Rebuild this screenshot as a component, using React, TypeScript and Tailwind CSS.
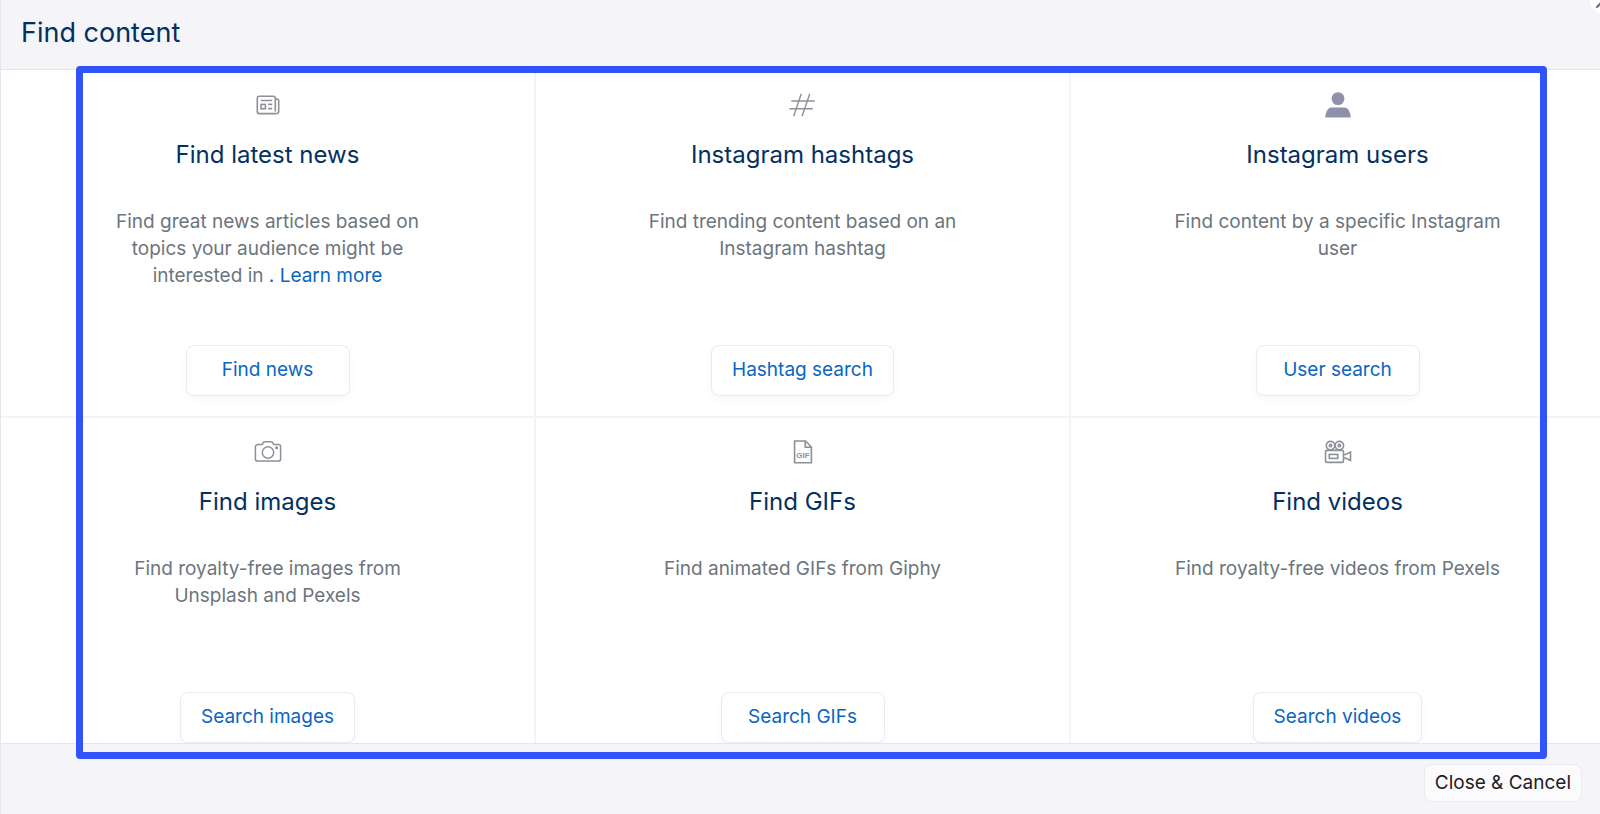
import { X } from "lucide-react";
import type { ReactNode } from "react";

type Source = {
  id: string;
  title: string;
  description: ReactNode;
  action: string;
  icon: ReactNode;
};

const NewsIcon = () => (
  <svg viewBox="0 0 28 28" className="h-7 w-7" fill="none" stroke="currentColor" strokeWidth="1.6" aria-hidden="true">
    <path d="M22.2 22.6H5.4a2.1 2.1 0 0 1-2.1-2.1V7.1c0-1.1.8-1.9 1.9-1.9h14.200c1.100 0 1.900.8 1.900 1.900v13.300" />
    <path d="M21.300 8h1.600c1 0 1.800.8 1.800 1.800v10.500c0 1.300-1.100 2.300-2.400 2.300" />
    <path d="M6.800 9.500h11.400M14.200 13.400h4M14.200 17.600h4" />
    <rect x="7" y="13.400" width="4.400" height="4.400" />
  </svg>
);

const HashIcon = () => (
  <svg viewBox="0 0 28 28" className="h-7 w-7" fill="none" stroke="currentColor" strokeWidth="1.400" aria-hidden="true">
    <path d="M12.300 2.800 4.600 25.300M20.800 2.800 13.100 25.300M2.300 10h23.500M.3 17.800h23.500" />
  </svg>
);

const UserIcon = () => (
  <svg viewBox="0 0 28 28" className="h-7 w-7" fill="#8f91aa" aria-hidden="true">
    <circle cx="14" cy="7.600" r="6.400" />
    <path d="M1.200 26.500c.3-3.800 1.500-7 3.200-8.700 1-1 2.200-1.300 3.800-1.300h11.600c1.600 0 2.800.3 3.800 1.300 1.700 1.700 2.900 4.900 3.200 8.700z" />
  </svg>
);

const CameraIcon = () => (
  <svg viewBox="0 0 28 28" className="h-7 w-7" fill="none" stroke="currentColor" strokeWidth="1.500" aria-hidden="true">
    <path d="M3.500 6.600h4.700l1.300-2.200c.3-.5.7-.7 1.200-.7h6.600c.5 0 .9.200 1.200.7l1.300 2.200h4.700c1.200 0 2.100.9 2.100 2.100v12.300c0 1.200-.9 2.100-2.100 2.100h-21c-1.200 0-2.100-.9-2.100-2.100V8.700c0-1.200.9-2.100 2.100-2.100z" />
    <circle cx="14" cy="14.500" r="5.700" />
    <circle cx="22.600" cy="9.800" r=".8" fill="currentColor" />
  </svg>
);

const GifIcon = () => (
  <svg viewBox="0 0 28 28" className="h-7 w-7" fill="none" stroke="currentColor" strokeWidth="1.600" aria-hidden="true">
    <path d="M16.500 3H5.600v21.800h16.800V9z" />
    <path d="M16.300 3v6.200h6" />
    <text
      x="14"
      y="20"
      textAnchor="middle"
      fontSize="8"
      fontWeight="700"
      fontFamily="Liberation Sans, sans-serif"
      fill="currentColor"
      stroke="none"
    >
      GIF
    </text>
  </svg>
);

const VideoIcon = () => (
  <svg viewBox="0 0 28 28" className="h-7 w-7" fill="none" stroke="currentColor" strokeWidth="1.600" aria-hidden="true">
    <circle cx="6.500" cy="7.600" r="4.200" />
    <circle cx="15.400" cy="7.600" r="4.200" />
    <circle cx="6.500" cy="7.600" r="1.200" />
    <circle cx="15.400" cy="7.600" r="1.200" />
    <rect x="1.500" y="12.400" width="18" height="12" rx="1.500" />
    <rect x="5.300" y="16.400" width="8.400" height="4" />
    <path d="M19.500 16.500h2l5-2.500v8.500l-5-2.500h-2" />
  </svg>
);

const sources: Source[] = [
  {
    id: "news",
    title: "Find latest news",
    description: (
      <>
        Find great news articles based on topics your audience might be interested in{" "}
        <a href="#learn-more" className="inline-block text-[#0a66bf]">
          . Learn more
        </a>
      </>
    ),
    action: "Find news",
    icon: <NewsIcon />,
  },
  {
    id: "hashtags",
    title: "Instagram hashtags",
    description: "Find trending content based on an Instagram hashtag",
    action: "Hashtag search",
    icon: <HashIcon />,
  },
  {
    id: "users",
    title: "Instagram users",
    description: "Find content by a specific Instagram user",
    action: "User search",
    icon: <UserIcon />,
  },
  {
    id: "images",
    title: "Find images",
    description: "Find royalty-free images from Unsplash and Pexels",
    action: "Search images",
    icon: <CameraIcon />,
  },
  {
    id: "gifs",
    title: "Find GIFs",
    description: "Find animated GIFs from Giphy",
    action: "Search GIFs",
    icon: <GifIcon />,
  },
  {
    id: "videos",
    title: "Find videos",
    description: "Find royalty-free videos from Pexels",
    action: "Search videos",
    icon: <VideoIcon />,
  },
];

function SourceCard({ source }: { source: Source }) {
  return (
    <section className="flex h-[347px] flex-col items-center border-r-2 border-b-2 border-[#f4f4f6] pt-5 pb-5 text-center">
      <div className="text-[#8e9098]">{source.icon}</div>
      <h2 className="mt-5 text-2xl leading-8 text-[#04305f]">{source.title}</h2>
      <p className="mt-[37px] w-[340px] text-[19px] leading-[27px] text-[#6c757d]">{source.description}</p>
      <button
        type="button"
        className="mt-auto h-[51px] min-w-[164px] rounded-lg border border-[#ebebed] bg-white px-5 text-[19px] text-[#0a66bf] shadow-[0_4px_8px_rgba(0,0,0,0.03)]"
      >
        {source.action}
      </button>
    </section>
  );
}

export default function App() {
  return (
    <div className="relative flex h-screen flex-col overflow-hidden border-l border-[#e6e6ea] bg-white font-[Inter,sans-serif]">
      <header className="flex h-[70px] shrink-0 items-center border-b border-[#e6e6ea] bg-[#f4f4f9] px-5 pb-1">
        <h1 className="text-[27px] leading-8 text-[#04305f]">Find content</h1>
      </header>

      <main className="-mr-1.5 grid min-h-0 flex-1 grid-cols-3 content-start overflow-hidden pt-px">
        {sources.map((source) => (
          <SourceCard key={source.id} source={source} />
        ))}
      </main>

      <footer className="flex h-[71px] shrink-0 items-center justify-end border-t border-[#e6e6ea] bg-[#f4f4f9] px-[18px] pt-2">
        <button
          type="button"
          className="h-[38px] rounded-lg border border-[#ebebef] bg-[#fbfbfd] px-2.5 text-[19px] text-[#1f2023]"
        >
          Close &amp; Cancel
        </button>
      </footer>

      <button
        type="button"
        aria-label="Close"
        className="absolute -top-3.5 -right-[18px] flex h-7 w-7 items-center justify-center rounded-full bg-white text-[#777]"
      >
        <X className="h-7 w-7 shrink-0" aria-hidden="true" />
      </button>

      {/* highlight around the source picker */}
      <div className="pointer-events-none absolute top-[66px] right-[53px] bottom-[55px] left-[75px] rounded border-[7px] border-[#3054fa]" />
    </div>
  );
}
